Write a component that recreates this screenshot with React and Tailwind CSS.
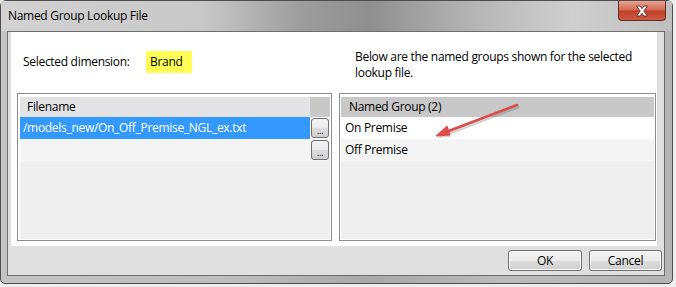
import React from "react";

const font = { fontFamily: '"Open Sans", "Noto Sans", sans-serif' };

const WinButton = ({ children, className = "" }) => (
  <div
    className={`flex items-center justify-center rounded-[3px] border border-[#707070] bg-[linear-gradient(#f2f2f2_0%,#ebebeb_50%,#dddddd_51%,#cfcfcf_100%)] shadow-[inset_0_0_0_1px_#fcfcfc] text-[12px] tracking-[-0.3px] text-black ${className}`}
  >
    {children}
  </div>
);

const DotsButton = () => (
  <div className="flex h-[20px] w-[18px] items-end justify-center rounded-[3px] border border-[#707070] bg-[linear-gradient(#f2f2f2_0%,#ebebeb_50%,#dddddd_51%,#cfcfcf_100%)] pb-[2px] text-[9px] leading-[9px] text-black">
    ...
  </div>
);

const CloseGlyph = () => (
  <svg width="14" height="12" viewBox="0 0 14 12">
    <path
      d="M1.5 1 H5 L7 3.6 L9 1 H12.5 L8.8 6 L12.5 11 H9 L7 8.4 L5 11 H1.5 L5.2 6 Z"
      fill="#ffffff"
      stroke="#5b2a22"
      strokeWidth="0.9"
      strokeLinejoin="round"
    />
  </svg>
);

const Arrow = () => (
  <svg
    className="pointer-events-none absolute left-0 top-0"
    width="676"
    height="287"
    viewBox="0 0 676 287"
  >
    <g opacity="0.25" transform="translate(1 2)">
      <line x1="517" y1="105" x2="446" y2="132" stroke="#555" strokeWidth="3" strokeLinecap="round" />
      <path d="M436 136 L447 126 L450 135 Z" fill="#555" />
    </g>
    <line x1="517" y1="105" x2="446" y2="132" stroke="#de4b4b" strokeWidth="2.5" strokeLinecap="round" />
    <path d="M436 136 L447 126 L450 135 Z" fill="#de4b4b" stroke="#de4b4b" strokeLinejoin="round" />
  </svg>
);

export default function App() {
  return (
    <div className="relative h-[287px] w-[676px] overflow-hidden bg-[#eeeeee]" style={font}>
      {/* window frame */}
      <div className="flex h-[284px] w-[673px] flex-col rounded-t-[6px] rounded-b-[5px] border border-[#4d4d4d] bg-[linear-gradient(to_right,#c4c4c4_0%,#bdbdbd_35%,#a9a9a9_55%,#bbbbbb_75%,#b4b4b4_100%)]">
        {/* title bar */}
        <div className="relative flex h-[30px] items-center bg-[linear-gradient(to_right,#d2d2d2_0%,#c8c8c8_30%,#9c9c9c_45%,#8f8f8f_55%,#b4b4b4_70%,#cfcfcf_85%,#bfbfbf_100%)] pl-[7px]">
          <span className="text-[12px] leading-none tracking-[-0.3px] text-black">Named Group Lookup File</span>
          <div className="absolute right-[6px] top-0 flex h-[20px] w-[48px] items-center justify-center rounded-b-[4px] border border-t-0 border-[#6b2a20] bg-[linear-gradient(#e8a493_0%,#d46a55_45%,#c0402a_55%,#cc5a42_100%)]">
            <CloseGlyph />
          </div>
        </div>

        {/* client area */}
        <div className="ml-[6px] flex h-[245px] w-[658px] flex-col border border-[#6e6e6e] bg-[#e0e0e0]">
          <div className="ml-[3px] flex h-[214px] w-[646px] flex-col bg-white">
            {/* top texts */}
            <div className="flex h-[61px] text-[12px] tracking-[-0.3px] text-black">
              <div className="flex w-[328px] items-start pl-[12px] pt-[19px]">
                <span className="w-[123px] leading-[22px]">Selected dimension:</span>
                <span className="h-[22px] w-[46px] bg-[#ffff55] pl-[4px] leading-[22px]">Brand</span>
              </div>
              <div className="pl-[16px] pt-[17px] leading-[16px]">
                <div>Below are the named groups shown for the selected</div>
                <div>lookup file.</div>
              </div>
            </div>

            {/* lists */}
            <div className="flex gap-[7px] pl-[6px] text-[12px] tracking-[-0.3px] text-black">
              <div className="flex h-[148px] w-[315px] flex-col border border-[#8a8d94] bg-white pl-[2px] pr-[1px] pt-[3px] pb-[1px]">
                <div className="flex h-[20px]">
                  <div className="flex flex-1 items-center bg-[#e3e3e5] pl-[7px]">Filename</div>
                  <div className="w-[20px] bg-[#c8c8c8]" />
                </div>
                <div className="flex h-[22px]">
                  <div className="flex flex-1 items-center bg-[#3399ff] pl-[3px] text-white">
                    /models_new/On_Off_Premise_NGL_ex.txt
                  </div>
                  <div className="flex w-[20px] items-center justify-center bg-white">
                    <DotsButton />
                  </div>
                </div>
                <div className="flex h-[22px]">
                  <div className="flex-1 bg-[#f4f4f4]" />
                  <div className="flex w-[20px] items-center justify-center bg-[#f4f4f4]">
                    <DotsButton />
                  </div>
                </div>
                <div className="flex-1 bg-[#efeff0]" />
              </div>

              <div className="flex h-[148px] w-[317px] flex-col border border-[#8a8d94] bg-white pl-[1px] pr-[1px] pt-[3px] pb-[1px]">
                <div className="flex h-[20px] items-center bg-[#c8c8c8] pl-[8px]">Named Group (2)</div>
                <div className="flex h-[22px] items-center bg-white pl-[4px]">On Premise</div>
                <div className="flex h-[22px] items-center bg-[#f4f4f4] pl-[4px]">Off Premise</div>
                <div className="flex-1 bg-[#efeff0]" />
              </div>
            </div>
          </div>

          {/* buttons */}
          <div className="flex justify-end gap-[7px] pr-[2px] pt-[4px]">
            <WinButton className="h-[21px] w-[74px]">OK</WinButton>
            <WinButton className="h-[21px] w-[73px]">Cancel</WinButton>
          </div>
        </div>
      </div>
      <Arrow />
    </div>
  );
}
